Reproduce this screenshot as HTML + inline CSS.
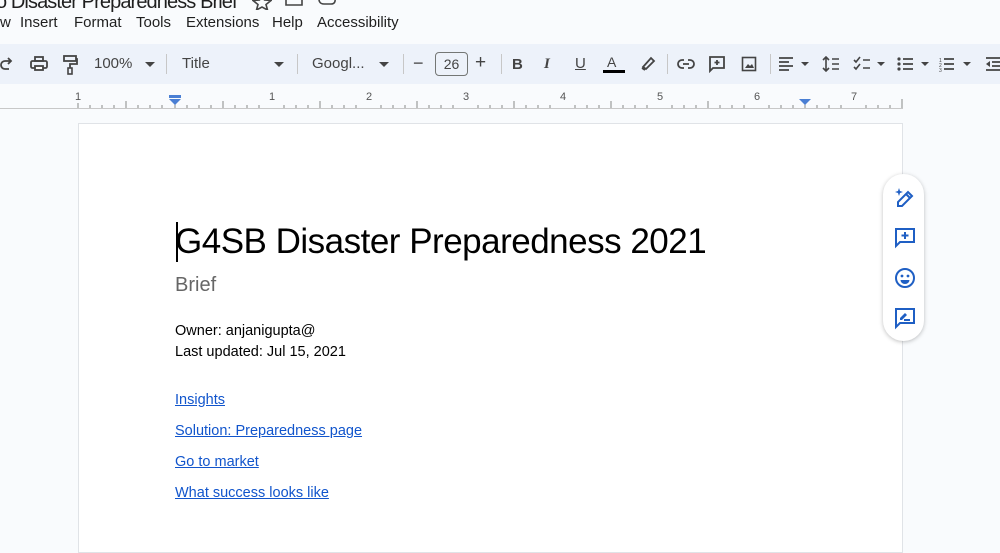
<!DOCTYPE html>
<html><head><meta charset="utf-8"><style>
*{margin:0;padding:0;box-sizing:border-box}
body{width:1000px;height:544px;overflow:hidden;background:#f9fbfd;font-family:"Liberation Sans",sans-serif;position:relative;color:#1f1f1f}
.a{position:absolute;white-space:nowrap}
.menu{top:14px;font-size:15px;color:#1f1f1f}
.tb{position:absolute;left:0;top:44px;width:1000px;height:40px;background:#edf2fa}
.tbt{position:absolute;top:55px;font-size:15px;color:#444}
.sep{position:absolute;top:54px;width:1px;height:20px;background:#c7c7c7}
.ruler{position:absolute;left:0;top:85px;width:1000px;height:24px;background:#f9fbfd}
.num{position:absolute;top:91px;font-size:11px;color:#555}
.page{position:absolute;left:78px;top:123px;width:825px;height:430px;background:#fff;border:1px solid #e0e3e7}
.lk{position:absolute;left:175px;font-size:14.5px;color:#1155cc;text-decoration:underline}
.side{position:absolute;left:883px;top:174px;width:41px;height:167px;background:#fff;border-radius:21px;box-shadow:0 1px 4px rgba(0,0,0,.25)}
svg{position:absolute}
</style></head><body>
<div class="a" style="left:-4px;top:-9px;font-size:20px;color:#1f1f1f;letter-spacing:-0.9px">o Disaster Preparedness Brief</div>
<svg style="left:252px;top:-4px" width="20" height="14" viewBox="0 0 20 14"><path d="M10 -2 L12.5 4 L19 4.5 L14 8.5 L15.5 14 L10 11 L4.5 14 L6 8.5 L1 4.5 L7.5 4Z" fill="none" stroke="#444" stroke-width="1.6"/></svg>
<svg style="left:284px;top:-4px" width="20" height="12"><path d="M2 0 V9 H18 V0" fill="none" stroke="#444" stroke-width="1.6"/></svg>
<svg style="left:316px;top:-4px" width="22" height="12"><path d="M3 0 Q2 8 8 8 H15 Q20 8 19 2" fill="none" stroke="#444" stroke-width="1.6"/></svg>
<div class="a menu" style="left:0">w</div>
<div class="a menu" style="left:20px">Insert</div>
<div class="a menu" style="left:74px">Format</div>
<div class="a menu" style="left:136px">Tools</div>
<div class="a menu" style="left:186px">Extensions</div>
<div class="a menu" style="left:272px">Help</div>
<div class="a menu" style="left:317px">Accessibility</div>
<div class="tb"></div>
<svg style="left:0;top:56px" width="14" height="16"><path d="M11 5 H5 A4 4 0 0 0 5 13 H9 M8 2 L11 5 L8 8" fill="none" stroke="#444" stroke-width="1.8"/></svg>
<svg style="left:30px;top:56px" width="18" height="16"><rect x="5" y="1" width="8" height="4" fill="none" stroke="#444" stroke-width="1.8"/><rect x="1" y="5" width="16" height="7" rx="1.5" fill="none" stroke="#444" stroke-width="1.8"/><rect x="5" y="10" width="8" height="4" fill="#fff" stroke="#444" stroke-width="1.8"/></svg>
<svg style="left:62px;top:55px" width="16" height="20"><rect x="2" y="1" width="12" height="5" fill="none" stroke="#444" stroke-width="1.8"/><path d="M14 4 H15 V9 H8 V13" fill="none" stroke="#444" stroke-width="1.8"/><rect x="6" y="13" width="4" height="6" fill="none" stroke="#444" stroke-width="1.6"/></svg>
<div class="tbt" style="left:94px">100%</div>
<svg style="left:145px;top:62px" width="10" height="6"><path d="M0 0 H10 L5 5Z" fill="#444"/></svg>
<div class="sep" style="left:166px"></div>
<div class="tbt" style="left:182px">Title</div>
<svg style="left:274px;top:62px" width="10" height="6"><path d="M0 0 H10 L5 5Z" fill="#444"/></svg>
<div class="sep" style="left:297px"></div>
<div class="tbt" style="left:312px">Googl...</div>
<svg style="left:379px;top:62px" width="10" height="6"><path d="M0 0 H10 L5 5Z" fill="#444"/></svg>
<div class="sep" style="left:403px"></div>
<div class="a" style="left:413px;top:53px;font-size:18px;color:#444">−</div>
<div class="a" style="left:435px;top:52px;width:33px;height:24px;border:1px solid #747775;border-radius:4px;font-size:14px;color:#444;text-align:center;line-height:22px">26</div>
<div class="a" style="left:475px;top:52px;font-size:19px;color:#444">+</div>
<div class="sep" style="left:501px"></div>
<div class="a" style="left:512px;top:56px;font-size:15px;font-weight:bold;color:#444">B</div>
<div class="a" style="left:544px;top:56px;font-size:15px;font-style:italic;color:#444;font-family:'Liberation Serif',serif;font-weight:bold">I</div>
<div class="a" style="left:575px;top:55px;font-size:15px;color:#444;text-decoration:underline">U</div>
<div class="a" style="left:607px;top:54px;font-size:14px;color:#444">A</div>
<div class="a" style="left:603px;top:70px;width:22px;height:3px;background:#000"></div>
<svg style="left:640px;top:55px" width="16" height="16"><path d="M3 12 L11 3 L14 6 L6 14 Z M2 13 L5 15" fill="none" stroke="#444" stroke-width="1.8"/></svg>
<div class="sep" style="left:667px"></div>
<svg style="left:677px;top:58px" width="18" height="12"><path d="M7 2 H5 A4 4 0 0 0 5 10 H7 M11 2 H13 A4 4 0 0 1 13 10 H11 M6 6 H12" fill="none" stroke="#444" stroke-width="1.8"/></svg>
<svg style="left:708px;top:55px" width="18" height="18"><path d="M2 2 H16 V13 H5 L2 16Z M9 5 V10 M6.5 7.5 H11.5" fill="none" stroke="#444" stroke-width="1.8"/></svg>
<svg style="left:741px;top:56px" width="16" height="16"><rect x="1.5" y="1.5" width="13" height="13" fill="none" stroke="#444" stroke-width="1.6"/><path d="M4 12 L7 8 L9 10 L11 8 L13 12Z" fill="#444"/></svg>
<div class="sep" style="left:770px"></div>
<svg style="left:779px;top:57px" width="32" height="14"><path d="M0 1 H14 M0 5 H10 M0 9 H14 M0 13 H10" stroke="#444" stroke-width="1.8"/><path d="M22 5 H30 L26 9Z" fill="#444"/></svg>
<svg style="left:822px;top:56px" width="18" height="16"><path d="M4 1 V15 M1 4 L4 1 L7 4 M1 12 L4 15 L7 12 M10 3 H17 M10 8 H17 M10 13 H17" fill="none" stroke="#444" stroke-width="1.6"/></svg>
<svg style="left:853px;top:56px" width="36" height="16"><path d="M1 4 L3 6 L7 1 M1 11 L3 13 L7 8 M10 4 H17 M10 12 H17" fill="none" stroke="#444" stroke-width="1.6"/><path d="M24 6 H32 L28 10Z" fill="#444"/></svg>
<svg style="left:897px;top:57px" width="36" height="14"><circle cx="2" cy="2" r="1.6" fill="#444"/><circle cx="2" cy="7" r="1.6" fill="#444"/><circle cx="2" cy="12" r="1.6" fill="#444"/><path d="M6 2 H16 M6 7 H16 M6 12 H16" stroke="#444" stroke-width="1.8"/><path d="M24 5 H32 L28 9Z" fill="#444"/></svg>
<svg style="left:939px;top:56px" width="36" height="16"><text x="0" y="6" font-size="5" fill="#444">1</text><text x="0" y="11" font-size="5" fill="#444">2</text><text x="0" y="16" font-size="5" fill="#444">3</text><path d="M5 3 H15 M5 8 H15 M5 13 H15" stroke="#444" stroke-width="1.8"/><path d="M24 6 H32 L28 10Z" fill="#444"/></svg>
<svg style="left:984px;top:57px" width="16" height="14"><path d="M2 1 H16 M8 5 H16 M8 9 H16 M2 13 H16" stroke="#444" stroke-width="1.8"/><path d="M6 4 L2 7 L6 10Z" fill="#444"/></svg>
<div class="ruler"></div>
<svg style="left:0;top:95px" width="1000" height="14">
<path d="M0 13.5 H903" stroke="#c8c8c8"/>
<g stroke="#888" stroke-width="1">
<path d="M78 8 V13 M90 10 V13 M102 10 V13 M114 10 V13 M126 6 V13 M138 10 V13 M150 10 V13 M162 10 V13 M175 5 V13 M187 10 V13 M199 10 V13 M211 10 V13 M223 6 V13 M235 10 V13 M247 10 V13 M259 10 V13 M320 6 V13 M417 6 V13 M514 6 V13 M611 6 V13 M708 6 V13 M805 6 V13 M902 4 V13"/>
<path d="M284 10V13M296 10V13M308 10V13M332 10V13M344 10V13M356 10V13M381 10V13M393 10V13M405 10V13M429 10V13M441 10V13M453 10V13M478 10V13M490 10V13M502 10V13M526 10V13M538 10V13M550 10V13M575 10V13M587 10V13M599 10V13M623 10V13M635 10V13M647 10V13M672 10V13M684 10V13M696 10V13M720 10V13M732 10V13M744 10V13M769 10V13M781 10V13M793 10V13M817 10V13M829 10V13M841 10V13M866 10V13M878 10V13M890 10V13"/>
</g></svg>
<div class="num" style="left:75px">1</div><div class="num" style="left:269px">1</div><div class="num" style="left:366px">2</div><div class="num" style="left:463px">3</div><div class="num" style="left:560px">4</div><div class="num" style="left:657px">5</div><div class="num" style="left:754px">6</div><div class="num" style="left:851px">7</div>
<svg style="left:168px;top:95px" width="14" height="10"><rect x="1" y="0" width="12" height="3" fill="#4a7fd4"/><path d="M1 4 H13 L7 10Z" fill="#4a7fd4"/></svg>
<svg style="left:798px;top:99px" width="14" height="8"><path d="M1 0 H13 L7 6Z" fill="#4a7fd4"/></svg>
<div class="page"></div>
<div class="a" style="left:176px;top:222px;width:1.5px;height:40px;background:#000"></div>
<div class="a" style="left:175px;top:222px;font-size:35px;color:#000;letter-spacing:-0.5px">G4SB Disaster Preparedness 2021</div>
<div class="a" style="left:175px;top:274px;font-size:20px;color:#666">Brief</div>
<div class="a" style="left:175px;top:323px;font-size:14.5px;color:#000">Owner: anjanigupta@</div>
<div class="a" style="left:175px;top:344px;font-size:14.5px;color:#000">Last updated: Jul 15, 2021</div>
<div class="lk" style="top:392px">Insights</div>
<div class="lk" style="top:423px">Solution: Preparedness page</div>
<div class="lk" style="top:454px">Go to market</div>
<div class="lk" style="top:485px">What success looks like</div>
<div class="side"></div>
<svg style="left:893px;top:186px" width="24" height="24"><path d="M5 20 L5 16 L15 6 L19 10 L9 20Z M13 8 L17 12" fill="none" stroke="#1f5fc4" stroke-width="2"/><path d="M6 2 L7 5 L10 6 L7 7 L6 10 L5 7 L2 6 L5 5Z" fill="#1f5fc4"/></svg>
<svg style="left:893px;top:226px" width="24" height="24"><path d="M3 3 H21 V16 H7 L3 20Z M12 6 V13 M8.5 9.5 H15.5" fill="none" stroke="#1f5fc4" stroke-width="2"/></svg>
<svg style="left:893px;top:266px" width="24" height="24"><circle cx="12" cy="12" r="9" fill="none" stroke="#1f5fc4" stroke-width="2"/><circle cx="9" cy="10" r="1.4" fill="#1f5fc4"/><circle cx="15" cy="10" r="1.4" fill="#1f5fc4"/><path d="M7.5 14 H16.5 A4.5 4 0 0 1 7.5 14Z" fill="#1f5fc4"/></svg>
<svg style="left:893px;top:306px" width="24" height="24"><path d="M3 3 H21 V17 H7 L3 21Z" fill="none" stroke="#1f5fc4" stroke-width="2"/><path d="M7 14 L7 12 L12 7 L14 9 L9 14Z" fill="#1f5fc4"/><path d="M11 14 H17" stroke="#1f5fc4" stroke-width="2"/></svg>
</body></html>
